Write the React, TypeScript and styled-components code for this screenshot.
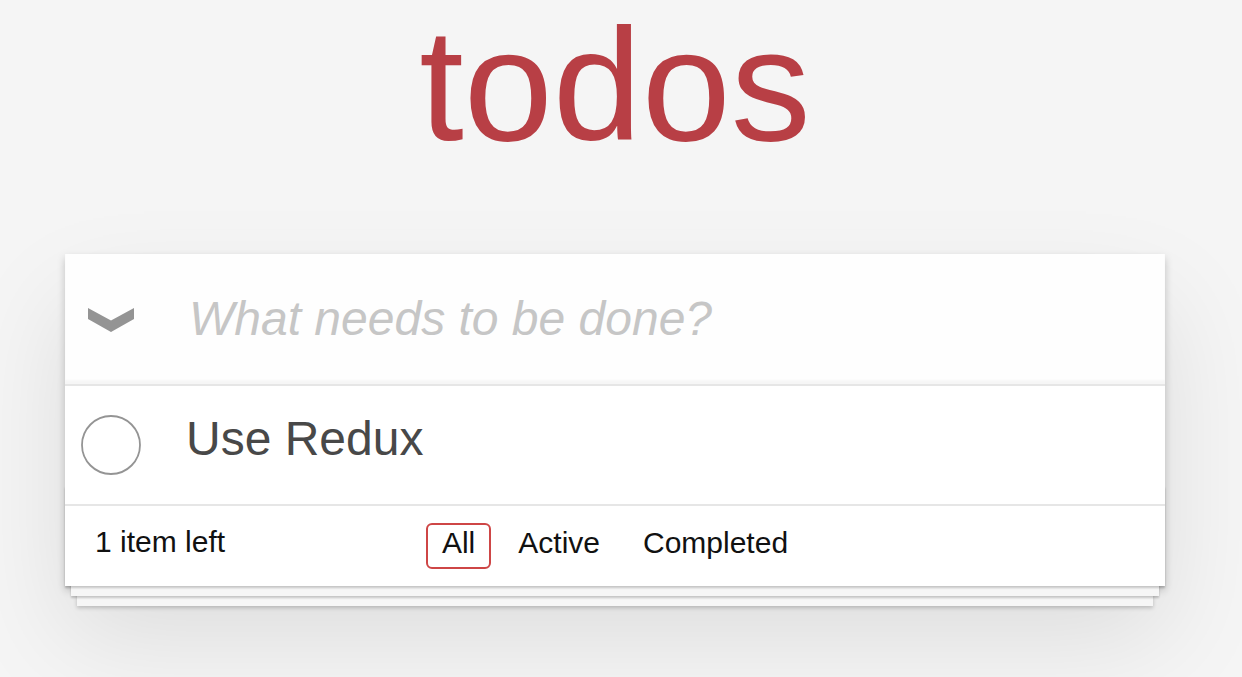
import React, { FormEvent, KeyboardEvent, useState, useCallback } from 'react';
import styled, { createGlobalStyle } from 'styled-components';

type TTodo = {
  id: number;
  text: string;
  completed: boolean;
};

type TFilter = 'All' | 'Active' | 'Completed';

type TStyledLink = {
  selected: boolean;
};

type TStyledLabel = {
  completed: boolean;
};

const GlobalStyle = createGlobalStyle`
  html, body {
    margin: 0;
    padding: 0;
    min-height: 100vh;
  }
  body {
    background: #f5f5f5;
    color: #111111;
    font-family: 'Helvetica Neue', Helvetica, 'Liberation Sans', Arial, sans-serif;
    font-size: 28px;
    line-height: 1.4em;
    -webkit-font-smoothing: antialiased;
  }
`;

const Page = styled.div`
  min-height: 100vh;
  padding-right: 12px;
  overflow: hidden;
`;

const Container = styled.div`
  width: 1100px;
  margin: 0 auto;
`;

const Title = styled.h1`
  margin: 0;
  padding-top: 5px;
  font-size: 160px;
  line-height: 160px;
  font-weight: 200;
  text-align: center;
  color: #b83f45;
  text-rendering: optimizeLegibility;
`;

const TodoApp = styled.section`
  position: relative;
  margin: 89px 0 80px 0;
  background: #fff;
  box-shadow: 0 4px 8px 0 rgba(0, 0, 0, 0.2), 0 50px 100px 0 rgba(0, 0, 0, 0.1);
`;

const Header = styled.header`
  display: flex;
  height: 130px;
  background: rgba(0, 0, 0, 0.003);
  box-shadow: inset 0 -4px 2px rgba(0, 0, 0, 0.03);
`;

const ToggleAll = styled.label`
  display: flex;
  align-items: center;
  justify-content: center;
  flex: 0 0 92px;
  padding-top: 2px;
  cursor: pointer;
  color: #949494;
`;

const NewTodo = styled.input`
  flex: 1;
  min-width: 0;
  margin: 0;
  padding: 32px 32px 32px 32px;
  border: none;
  outline: none;
  background: transparent;
  font-family: inherit;
  font-size: 48px;
  line-height: 1.4em;
  color: #484848;
  box-sizing: border-box;

  &::placeholder {
    font-style: italic;
    font-weight: 300;
    color: #c6c6c6;
  }
`;

const Main = styled.section`
  border-top: 2px solid #e6e6e6;
`;

const TodoList = styled.ul`
  margin: 0;
  padding: 0;
  list-style: none;
`;

const Item = styled.li`
  display: flex;
  align-items: center;
  font-size: 48px;
  border-bottom: 2px solid #ededed;

  &:last-child {
    border-bottom: none;
  }
`;

const Toggle = styled.button`
  flex: 0 0 60px;
  height: 60px;
  margin: 0 45px 0 16px;
  padding: 0;
  border: none;
  background: none;
  cursor: pointer;
  display: flex;
`;

const Label = styled.label<TStyledLabel>`
  flex: 1;
  padding: 24px 30px 36px 0;
  line-height: 1.2;
  font-weight: 400;
  color: #484848;
  word-break: break-all;
  ${props =>
    props.completed &&
    `
    color: #949494;
    text-decoration: line-through;
  `}
`;

const Footer = styled.footer`
  position: relative;
  display: grid;
  grid-template-columns: 1fr auto 1fr;
  align-items: center;
  height: 80px;
  padding: 0 30px;
  border-top: 2px solid #e6e6e6;
  font-size: 30px;
  color: #111111;

  &:before {
    content: '';
    position: absolute;
    right: 0;
    bottom: 0;
    left: 0;
    height: 100px;
    overflow: hidden;
    pointer-events: none;
    box-shadow: 0 2px 2px rgba(0, 0, 0, 0.2), 0 16px 0 -6px #f6f6f6,
      0 18px 2px -6px rgba(0, 0, 0, 0.2), 0 32px 0 -12px #f6f6f6,
      0 34px 4px -12px rgba(0, 0, 0, 0.2);
  }
`;

const TodoCount = styled.span`
  position: relative;
  line-height: 30px;
  padding-bottom: 8px;
  text-align: left;
`;

const Filters = styled.ul`
  position: relative;
  display: flex;
  gap: 11px;
  margin: 0;
  padding: 0;
  list-style: none;
`;

const FilterLink = styled.a<TStyledLink>`
  display: block;
  padding: 3px 14px 9px;
  line-height: 30px;
  color: inherit;
  text-decoration: none;
  border: 2px solid transparent;
  border-radius: 6px;
  cursor: pointer;
  ${props =>
    props.selected &&
    `
    border-color: #ce4646;
  `}
`;

function Chevron() {
  return (
    <svg width='46' height='24' viewBox='0 0 46 24'>
      <polygon
        points='0,0 23,12.5 46,0 46,11 23,24 0,11'
        fill='currentColor'
      />
    </svg>
  );
}

function Circle({ done }: { done: boolean }) {
  return (
    <svg width='60' height='60' viewBox='0 0 60 60'>
      <circle
        cx='30'
        cy='30'
        r='29'
        fill='none'
        stroke={done ? '#59a193' : '#949494'}
        strokeWidth='1.8'
      />
      {done && (
        <path
          d='M17 31 L26 40 L44 20'
          fill='none'
          stroke='#3ea390'
          strokeWidth='3'
        />
      )}
    </svg>
  );
}

const FILTERS: TFilter[] = ['All', 'Active', 'Completed'];

function App() {
  const [todos, setTodos] = useState<TTodo[]>([
    { id: 0, text: 'Use Redux', completed: false }
  ]);
  const [draft, setDraft] = useState<string>('');
  const [filter, setFilter] = useState<TFilter>('All');

  const handleInput = useCallback((e: FormEvent<HTMLInputElement>): void => {
    setDraft(e.currentTarget.value);
  }, []);

  const handleKey = useCallback(
    (e: KeyboardEvent<HTMLInputElement>): void => {
      if (e.key !== 'Enter' || !draft.trim()) return;
      setTodos(prev => [
        ...prev,
        { id: Date.now(), text: draft.trim(), completed: false }
      ]);
      setDraft('');
    },
    [draft]
  );

  const toggleTodo = (id: number) =>
    setTodos(prev =>
      prev.map(t => (t.id === id ? { ...t, completed: !t.completed } : t))
    );

  const toggleAll = () => {
    const allDone = todos.every(t => t.completed);
    setTodos(prev => prev.map(t => ({ ...t, completed: !allDone })));
  };

  const left = todos.filter(t => !t.completed).length;
  const visible = todos.filter(t =>
    filter === 'All' ? true : filter === 'Active' ? !t.completed : t.completed
  );

  return (
    <Page>
      <GlobalStyle />
      <Container>
        <Title>todos</Title>
        <TodoApp>
          <Header>
            <ToggleAll onClick={toggleAll}>
              <Chevron />
            </ToggleAll>
            <NewTodo
              type='text'
              placeholder='What needs to be done?'
              value={draft}
              onChange={handleInput}
              onKeyDown={handleKey}
            />
          </Header>
          <Main>
            <TodoList>
              {visible.map(todo => (
                <Item key={todo.id}>
                  <Toggle onClick={() => toggleTodo(todo.id)}>
                    <Circle done={todo.completed} />
                  </Toggle>
                  <Label completed={todo.completed}>{todo.text}</Label>
                </Item>
              ))}
            </TodoList>
          </Main>
          <Footer>
            <TodoCount>
              {left} {left === 1 ? 'item' : 'items'} left
            </TodoCount>
            <Filters>
              {FILTERS.map(f => (
                <li key={f}>
                  <FilterLink selected={filter === f} onClick={() => setFilter(f)}>
                    {f}
                  </FilterLink>
                </li>
              ))}
            </Filters>
          </Footer>
        </TodoApp>
      </Container>
    </Page>
  );
}

export default App;
